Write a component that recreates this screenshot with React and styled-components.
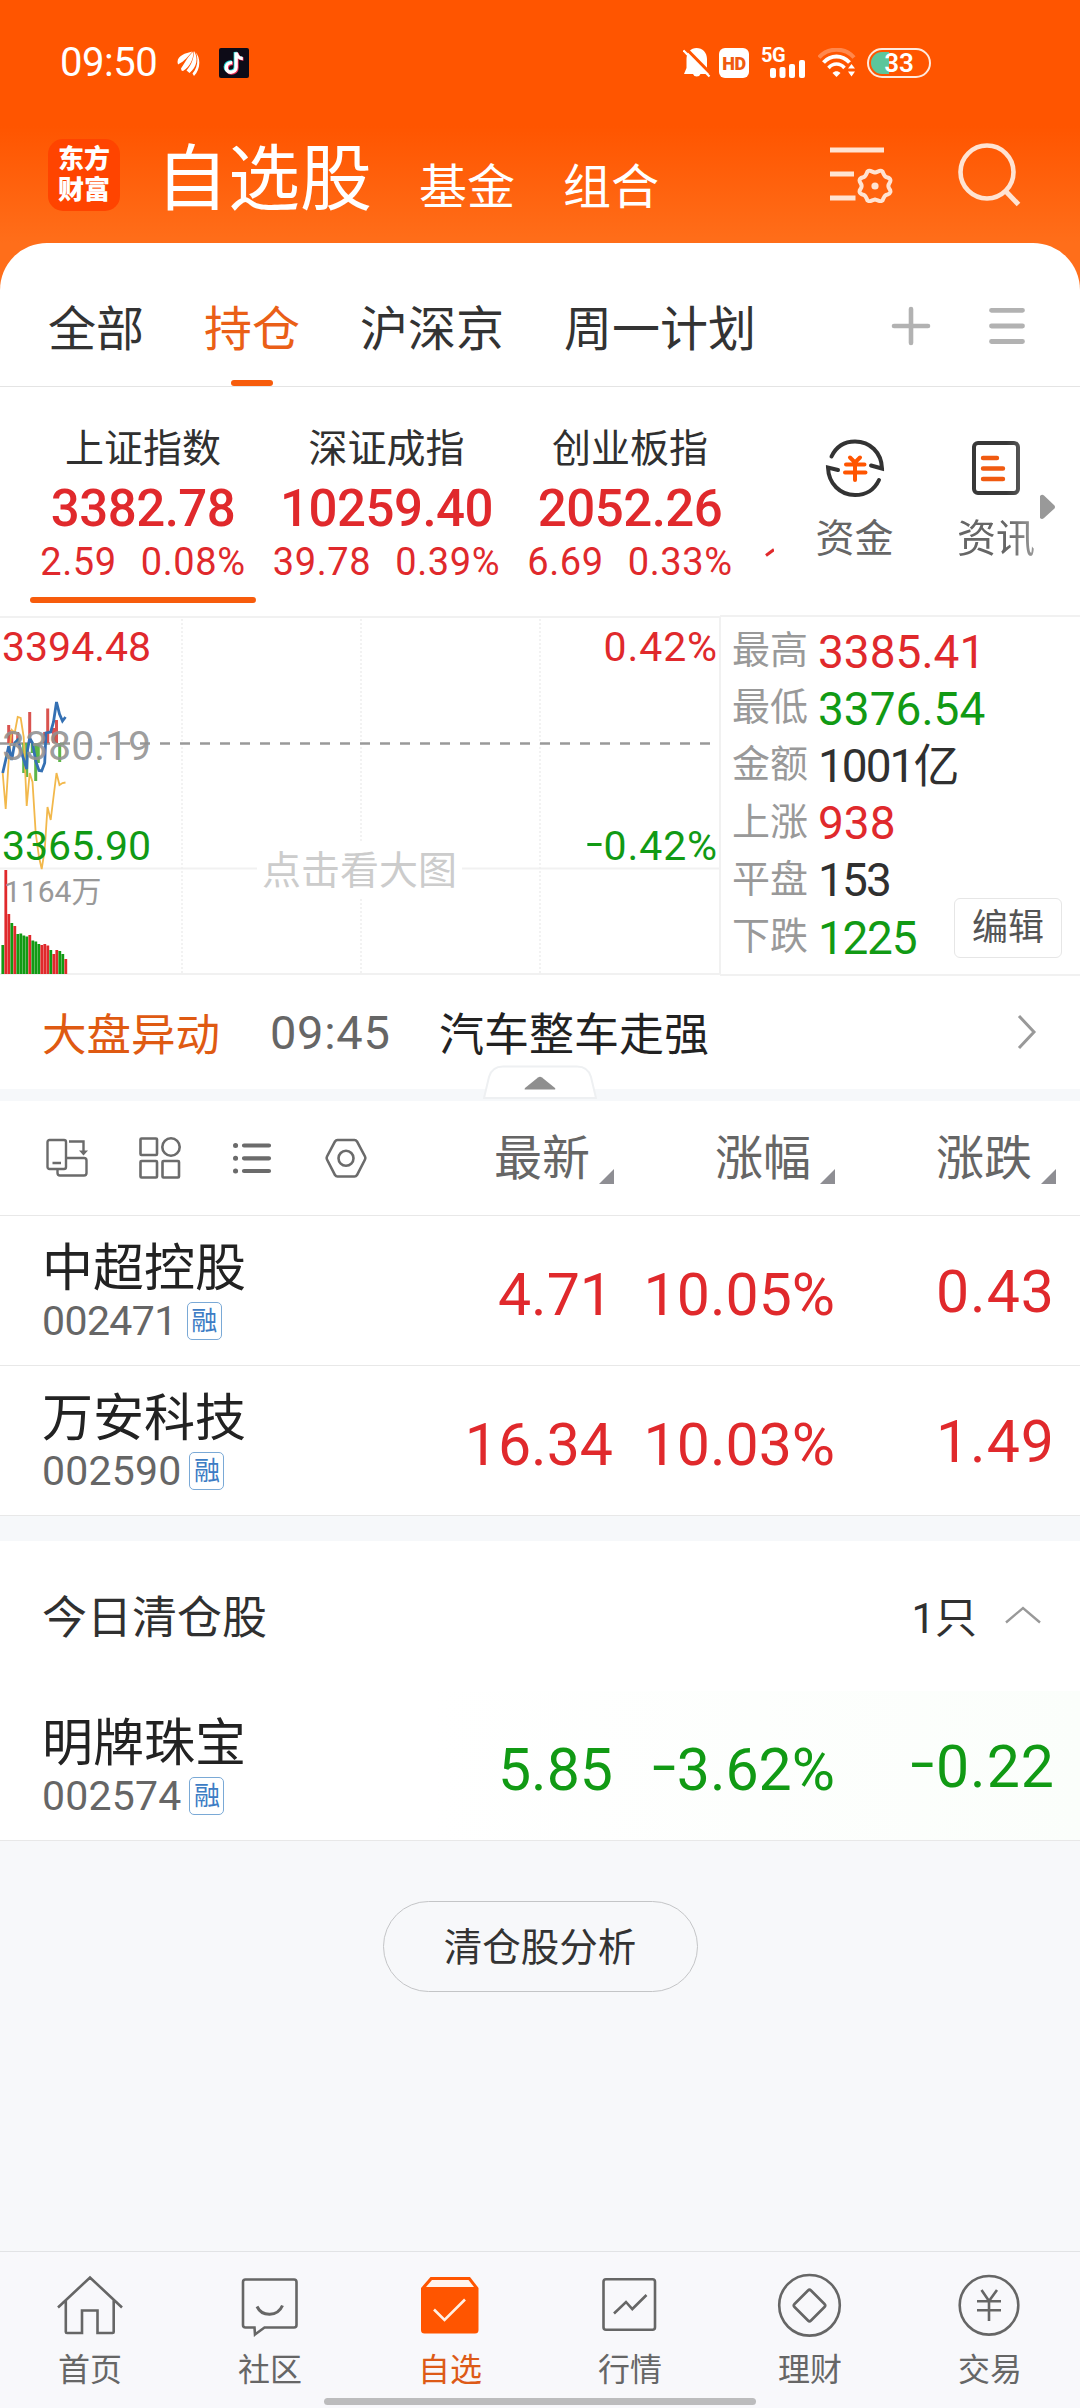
import styled, { createGlobalStyle } from "styled-components";

const RED = "#e0292c";
const GREEN = "#119a14";
const ORANGE = "#f75c0c";

const indexes = [
  { name: "上证指数", value: "3382.78", change: "2.59", percent: "0.08%", active: true },
  { name: "深证成指", value: "10259.40", change: "39.78", percent: "0.39%" },
  { name: "创业板指", value: "2052.26", change: "6.69", percent: "0.33%" },
];

const stats = [
  { label: "最高", value: "3385.41", color: RED },
  { label: "最低", value: "3376.54", color: GREEN },
  { label: "金额", value: "1001亿", color: "#303030", spacing: -2 },
  { label: "上涨", value: "938", color: RED },
  { label: "平盘", value: "153", color: "#303030", spacing: -1.8 },
  { label: "下跌", value: "1225", color: GREEN, spacing: -1.3 },
];

const holdings = [
  { name: "中超控股", code: "002471", price: "4.71", percent: "10.05%", diff: "0.43" },
  { name: "万安科技", code: "002590", price: "16.34", percent: "10.03%", diff: "1.49" },
];

const cleared = [
  { name: "明牌珠宝", code: "002574", price: "5.85", percent: "-3.62%", diff: "-0.22", down: true },
];

// [top, isUp] for every minute, the base line is y=359
const volumes = [
  [330, 0], [255, 1], [299, 1], [308, 0], [311, 1], [319, 0], [318.5, 0], [320.5, 0],
  [321.5, 0], [320, 1], [325.5, 0], [326.5, 0], [329, 0], [330, 1], [329, 1], [330.5, 1],
  [335, 0], [339, 1], [335, 1], [336, 0], [339, 0], [344, 1],
];

// [x, end y], sticks grow from the zero line
const sticks = [
  [9.7, 110], [12.7, 115], [18.7, 117], [30.7, 97], [45.7, 117], [48.7, 93.5], [54.5, 113], [57.5, 105],
  [24.7, 158], [27.7, 162], [33.3, 138], [36.7, 166], [39.3, 148], [60.7, 147], [63.5, 130],
];

/* ---------- icons ---------- */

const LeafIcon = () => (
  <svg width="24" height="26" viewBox="0 0 24 26" fill="#fff">
    <path d="M0.500 12C1 5 8 3.500 15.500 1.500C11 6 8 11 1 14.500Z" />
    <path d="M4 18.500C8 12.500 11 6 16.500 1.500C16.500 9 13 17 6 21Q4 21 4 18.500Z" />
    <path d="M9.500 20.500C14.500 15 17 8 17 1C21.500 8 20 17 12.500 23Z" />
    <path d="M15.500 23.500C21 17 21.500 8 18.500 2C24.500 9 23 20 17 26Z" />
  </svg>
);

const TiktokIcon = () => (
  <svg width="30" height="30" viewBox="0 0 30 30" fill="none" strokeWidth="3.4">
    <rect width="30" height="30" rx="2" fill="#0d0b17" />
    <path d="M12.500 14C4.500 13.500 4.500 23.500 11 23.500C14 23.500 16.300 21.500 16.300 18.500V4C17 8 19.500 10 23 10" stroke="#25d8d8" />
    <path d="M14 15.500C6.500 15 6.500 25 12.500 25C15.500 25 18 23 18 20V5C18.800 9 21 11 24.500 11" stroke="#f0305a" />
    <path d="M13.200 14.600C5.500 14.200 5.500 24.200 11.800 24.200C14.800 24.200 17.100 22.200 17.100 19.200V4.500C18 8.500 20.500 10.500 23.800 10.500" stroke="#fff" />
  </svg>
);

const MuteIcon = () => (
  <svg width="28" height="31" viewBox="0 0 28 31">
    <path
      d="M13.500 0C19.500 0 24 4.500 24 11V20L27 26H17.500A4 4 0 0 1 10 26H1L3.500 20V11C3.500 4.500 8 0 13.500 0Z"
      fill="#fff"
    />
    <path d="M2.500 0L29 27" stroke="#ff5500" strokeWidth="3" />
    <path d="M0.500 2.500L26.500 28.500" stroke="#fff" strokeWidth="2.200" />
    <path d="M-1 5L3 0L4.500 6Z" fill="#ff5500" />
    <path d="M0.500 2.500L6 8" stroke="#fff" strokeWidth="2.200" />
  </svg>
);

const SignalIcon = () => (
  <svg width="36" height="18" viewBox="0 0 36 18" fill="#fff">
    <rect x="0" y="8" width="6" height="10" rx="2" />
    <rect x="9.500" y="7" width="6" height="11" rx="2" />
    <rect x="19" y="4" width="6" height="14" rx="2" />
    <rect x="29" y="0" width="6" height="18" rx="2" />
  </svg>
);

const WifiIcon = () => (
  <svg width="38" height="30" viewBox="0 0 38 30" fill="none" stroke="#fff" strokeWidth="4">
    <path d="M1 9.500C10 -1 27 -1 36 9.500" opacity=".3" />
    <path d="M5.500 14.500C13 6.500 24 6.500 31.500 14.500" />
    <path d="M10.500 20C15 14.800 22 14.800 26.500 20" strokeWidth="3.500" />
    <path d="M14.500 25C17 22.500 20 22.500 22.500 25L18.500 29Z" fill="#fff" stroke="none" />
    <path d="M30 20.500L33.500 16L37 20.500ZM30 23.500H37L33.500 28.500Z" fill="#fff" stroke="none" />
  </svg>
);

const ListSettingIcon = () => (
  <svg width="64" height="56" viewBox="0 0 64 56" fill="none" stroke="#ffe3d2" strokeWidth="5">
    <path d="M0 3H54M0 27H24M0 51H25.500" />
    <path
      d="M45 25.500C48 25 50 22.500 52.500 24.500C54 27.500 54 30 57.500 30.500C61 31.500 61 34 59.500 36C58 38 58 40 59.500 42C61 44 61 46.500 57.500 47.500C54 48 54 50.500 52.500 53.500C50 55.500 48 53 45 52.500C42 53 40 55.500 37.500 53.500C36 50.500 36 48 32.500 47.500C29 46.500 29 44 30.500 42C32 40 32 38 30.500 36C29 34 29 31.500 32.500 30.500C36 30 36 27.500 37.500 24.500C40 22.500 42 25 45 25.500Z"
      strokeWidth="4"
      strokeLinejoin="round"
    />
    <circle cx="45" cy="39" r="3.600" fill="#ffe3d2" stroke="none" />
  </svg>
);

const SearchIcon = () => (
  <svg width="64" height="64" viewBox="0 0 64 64" fill="none" stroke="#ffe3d2" strokeWidth="4.6">
    <circle cx="29" cy="29" r="26.500" />
    <path d="M47.500 48L60.500 61.500" strokeWidth="5" />
  </svg>
);

const PlusIcon = () => (
  <svg width="40" height="40" viewBox="0 0 40 40" stroke="#b2b2b2" strokeWidth="4.600" strokeLinecap="round">
    <path d="M3 20H37M20 3V37" />
  </svg>
);

const MenuIcon = () => (
  <svg width="40" height="40" viewBox="0 0 40 40" stroke="#b2b2b2" strokeWidth="4.800" strokeLinecap="round">
    <path d="M4.500 4.300H35.500M4.500 20H35.500M4.500 35.500H35.500" />
  </svg>
);

const FundIcon = () => (
  <svg width="60" height="60" viewBox="0 0 60 60" fill="none" stroke="#333" strokeWidth="4">
    <path d="M6.500 18.500C11 9 19 3.500 30 3.500C45 3.500 56.500 14.500 57 30.500L46 27.500" strokeLinecap="round" />
    <path d="M54 42C49.500 51.500 41 57 30 57C15 57 3.500 45.500 3 29.500L13 32" strokeLinecap="round" />
    <path d="M25 19.500L30 24.500L35 19.500M21 26.500H39.500M20 34.500H40.500M30 24.500V42" stroke="#ff5500" strokeLinecap="round" />
  </svg>
);

const NewsIcon = () => (
  <svg width="60" height="60" viewBox="0 0 60 60" fill="none" stroke="#383838" strokeWidth="4">
    <rect x="8" y="5" width="44" height="50" rx="4" />
    <path d="M17 20H31M17 30.500H37M17 41H37" stroke="#f05a10" strokeWidth="4.400" strokeLinecap="round" />
  </svg>
);

const RotateIcon = () => (
  <svg width="44" height="44" viewBox="0 0 44 44" fill="none" stroke="#6b6b6b" strokeWidth="2.400">
    <rect x="2.500" y="4" width="18.500" height="29" rx="2" />
    <path d="M7.500 27H16M24 5.500H38.500V17M21.500 22H39C40.500 22 41.500 23 41.500 24.500V37C41.500 38.500 40.500 39.500 39 39.500H15C13.500 39.500 12.500 38.500 12.500 37V33.500" />
    <path d="M34 14.500H43L38.500 19.500Z" fill="#6b6b6b" stroke="none" />
  </svg>
);

const GridIcon = () => (
  <svg width="44" height="44" viewBox="0 0 44 44" fill="none" stroke="#6b6b6b" strokeWidth="2.600">
    <rect x="2.500" y="2.500" width="16.500" height="16.500" rx="1" />
    <circle cx="33" cy="11" r="8.700" />
    <rect x="2.500" y="25" width="16.500" height="16.500" rx="1" />
    <rect x="24.500" y="25" width="16.500" height="16.500" rx="1" />
  </svg>
);

const BulletsIcon = () => (
  <svg width="44" height="44" viewBox="0 0 44 44" stroke="#6b6b6b" strokeWidth="4.200" strokeLinecap="round">
    <path d="M13 9.500H38M13 22.300H38M13 35H38" />
    <path d="M4.500 9.500H4.600M4.500 22.300H4.600M4.500 35H4.600" strokeWidth="5" />
  </svg>
);

const HexIcon = () => (
  <svg width="44" height="44" viewBox="0 0 44 44" fill="none" stroke="#6b6b6b" strokeWidth="2.600">
    <path d="M13.500 4H30.500Q32 4 33 5.500L41 20.500Q41.800 22 41 23.500L33 39Q32 40.500 30.500 40.500H13.500Q12 40.500 11 39L3 23.500Q2.200 22 3 20.500L11 5.500Q12 4 13.500 4Z" />
    <circle cx="22" cy="22.300" r="7.500" />
  </svg>
);

const ChevronRight = () => (
  <svg width="20" height="36" viewBox="0 0 20 36" fill="none" stroke="#999" strokeWidth="3">
    <path d="M2 2L17 18L2 34" />
  </svg>
);

const ChevronUp = () => (
  <svg width="36" height="18" viewBox="0 0 36 18" fill="none" stroke="#999" strokeWidth="2.400">
    <path d="M1 16.500L18 2L35 16.500" />
  </svg>
);

const NavIcon = ({ children }) => (
  <svg width="72" height="72" viewBox="0 0 72 72" fill="none" stroke="#666" strokeWidth="2.600">
    {children}
  </svg>
);

const navs = [
  {
    label: "首页",
    icon: (
      <NavIcon>
        <path d="M4 37.500L36 7.500L68 37.500M11.800 30.500V62Q11.800 63 13 63H28V40.500H43.500V63H58.500Q59.700 63 59.700 62V30.500" />
      </NavIcon>
    ),
  },
  {
    label: "社区",
    icon: (
      <NavIcon>
        <path d="M11.500 9.500H60Q62.500 9.500 62.500 12V55Q62.500 57.500 60 57.500H30.500L21 64.500L20.500 57.500H11.500Q9 57.500 9 55V12Q9 9.500 11.500 9.500Z" />
        <path d="M23 36.500C28 47 43.500 47 48.500 35.500" strokeWidth="3" />
      </NavIcon>
    ),
  },
  {
    label: "自选",
    active: true,
    icon: (
      <NavIcon>
        <path d="M7 18L16.500 7H56L64.500 18V60Q64.500 63.500 61 63.500H10.500Q7 63.500 7 60Z" fill="#ff5500" stroke="none" />
        <path d="M12 17L18 10H54.500L60 17Z" fill="#fff4ec" stroke="none" />
        <path d="M20 39.500L30.500 50L51 29.500" stroke="#fff0e4" />
      </NavIcon>
    ),
  },
  {
    label: "行情",
    icon: (
      <NavIcon>
        <rect x="9.500" y="9.300" width="51.500" height="50.500" rx="2.500" />
        <path d="M20 43.500L32 32L38.300 39L52.500 25" />
      </NavIcon>
    ),
  },
  {
    label: "理财",
    icon: (
      <NavIcon>
        <circle cx="35.500" cy="35.300" r="30.300" />
        <path d="M34 20.500Q35.500 19 37 20.500L50.500 34Q52 35.500 50.500 37L37 50.500Q35.500 52 34 50.500L20.500 37Q19 35.500 20.500 34Z" />
      </NavIcon>
    ),
  },
  {
    label: "交易",
    icon: (
      <NavIcon>
        <circle cx="35" cy="35.300" r="29.300" />
        <path d="M27.500 20L35 31L43 20M23 31.300H47M23 40.300H47M35 31V51" />
      </NavIcon>
    ),
  },
];

const MinuteChart = () => (
  <ChartSvg width="722" height="360" viewBox="0 0 722 360" fill="none">
    <path d="M1 2H722M1 253.500H722M1 359H722M721 1V360" stroke="#f1f1f1" strokeWidth="2" />
    <path d="M183 4V358M362 4V358M541 4V358" stroke="#eee" strokeWidth="1.500" strokeDasharray="2 2" />
    <path d="M1 128.500H712" stroke="#999" strokeWidth="2.400" strokeDasharray="10 10" />
    {sticks.map(([x, y]) => (
      <path key={x} d={`M${x} 128V${y}`} stroke={y < 128 ? "#d9534f" : "#5eb548"} strokeWidth="3" />
    ))}
    {volumes.map(([y, up], i) => (
      <path key={i} d={`M${3.800 + i * 3} 359V${y}`} stroke={up ? "#e0292c" : "#119a14"} strokeWidth="2.800" />
    ))}
    <path
      d="M3.700 158L6.700 194L9.700 145L12.700 115L15.700 118L18.700 102L21.700 103L24.700 122L27.700 191L30.700 158L33.500 167L36.700 218L40 242L42.700 254L45.700 235L48.500 192L51.700 205L54.500 182L57.500 158L60.500 170L63.500 168L66.500 167.500"
      stroke="#f2b84b"
      strokeWidth="1.800"
    />
    <path
      d="M3.700 158L6.700 145L9.700 131L12.700 145L15.700 128L18.700 125L21.700 135L27.700 154L28.500 135L30.700 123L33.500 128L36.700 146L40 155.500L42.700 156L45.700 148L47 118L51.700 117L54.500 107L57.500 87L60.500 99L63.500 106L66.500 102"
      stroke="#3470b3"
      strokeWidth="2.800"
    />
  </ChartSvg>
);

const Signed = ({ value }) =>
  value.startsWith("-") ? (
    <>
      <Minus>-</Minus>
      {value.slice(1)}
    </>
  ) : (
    value
  );

const StockRow = ({ stock }) => (
  <Row $down={stock.down}>
    <RowTitle>
      <StockName>{stock.name}</StockName>
      <StockCode $tight={stock.code.includes("1")}>
        {stock.code}
        <Badge>融</Badge>
      </StockCode>
    </RowTitle>
    <Figure $down={stock.down}>{stock.price}</Figure>
    <Figure $down={stock.down}><Signed value={stock.percent} /></Figure>
    <Figure $down={stock.down} $last><Signed value={stock.diff} /></Figure>
  </Row>
);

export default function App() {
  return (
    <>
      <GlobalStyle />
      <Screen>
        <Header>
          <StatusBar>
            <Clock>09:50</Clock>
            <LeafIcon />
            <TiktokIcon />
            <StatusIcons>
              <MuteIcon />
              <HdMark>HD</HdMark>
              <Network>
                <span>5G</span>
                <SignalIcon />
              </Network>
              <WifiIcon />
              <Battery>33</Battery>
            </StatusIcons>
          </StatusBar>
          <TitleBar>
            <Logo>东方<br />财富</Logo>
            <Titles>
              <MainTitle>自选股</MainTitle>
              <SubTitle>基金</SubTitle>
              <SubTitle>组合</SubTitle>
            </Titles>
            <TitleActions>
              <ListSettingIcon />
              <SearchIcon />
            </TitleActions>
          </TitleBar>
        </Header>

        <Sheet>
          <Tabs>
            <Tab>全部</Tab>
            <Tab $active>持仓</Tab>
            <Tab>沪深京</Tab>
            <Tab>周一计划</Tab>
            <TabActions>
              <PlusIcon />
              <MenuIcon />
            </TabActions>
          </Tabs>

          <IndexBar>
            <IndexList>
              {indexes.map((item) => (
                <IndexItem key={item.name} $active={item.active}>
                  <IndexName>{item.name}</IndexName>
                  <IndexValue>{item.value}</IndexValue>
                  <IndexChange>
                    <span>{item.change}</span>
                    <span>{item.percent}</span>
                  </IndexChange>
                </IndexItem>
              ))}
              <IndexPeek width="9" height="9" viewBox="0 0 9 9">
                <path d="M1 7.500L9 1.500" stroke={RED} strokeWidth="3" />
              </IndexPeek>
            </IndexList>
            <Shortcut>
              <FundIcon />
              资金
            </Shortcut>
            <Shortcut $fade>
              <NewsIcon />
              资讯
            </Shortcut>
            <MoreArrow width="16" height="26" viewBox="0 0 16 26">
              <path d="M0 2Q2 0 4 1.500L14.500 11.500Q15.500 13 14.500 14.500L4 24Q2 26 0 24Z" fill="#999" />
            </MoreArrow>
          </IndexBar>

          <Market>
            <ChartBox>
              <MinuteChart />
              <ChartLabel $top={14} $left={2} $color={RED}>3394.48</ChartLabel>
              <ChartLabel $top={113} $left={2} $color="rgba(145, 145, 145, .88)">3380.19</ChartLabel>
              <ChartLabel $top={213} $left={2} $color={GREEN}>3365.90</ChartLabel>
              <ChartLabel $top={14} $right={2} $color={RED}>0.42%</ChartLabel>
              <ChartLabel $top={213} $right={2} $color={GREEN}><Signed value="-0.42%" /></ChartLabel>
              <ChartLabel $top={260} $left={4} $color="#999" $size={30}>1164万</ChartLabel>
              <ChartHint>点击看大图</ChartHint>
            </ChartBox>
            <Stats>
              {stats.map((item) => (
                <Stat key={item.label}>
                  <StatLabel>{item.label}</StatLabel>
                  <StatValue $color={item.color} $spacing={item.spacing}>{item.value}</StatValue>
                </Stat>
              ))}
              <EditButton>编辑</EditButton>
            </Stats>
          </Market>

          <NewsBar>
            <NewsTag>大盘异动</NewsTag>
            <NewsTime>09:45</NewsTime>
            <NewsText>汽车整车走强</NewsText>
            <ChevronRight />
            <Handle width="114" height="36" viewBox="0 0 114 36">
              <path d="M1 33L6 12Q9 1.500 20 1.500H94Q105 1.500 108 12L113 33Z" fill="#fff" stroke="#eef0f2" strokeWidth="2" />
              <path d="M42 24.500Q41 24.500 42 23L55 12.500Q57 11 59 12.500L72 23Q73 24.500 71 24.500Z" fill="#8f8f8f" />
            </Handle>
          </NewsBar>
          <Divider $height={12} />

          <ListHead>
            <Tools>
              <RotateIcon />
              <GridIcon />
              <BulletsIcon />
              <HexIcon />
            </Tools>
            {["最新", "涨幅", "涨跌"].map((label) => (
              <HeadCell key={label}>
                {label}
                <svg width="15" height="15" viewBox="0 0 15 15"><path d="M15 0V15H0Z" fill="#8e8e93" /></svg>
              </HeadCell>
            ))}
          </ListHead>
          {holdings.map((stock) => (
            <StockRow key={stock.code} stock={stock} />
          ))}
          <Divider $height={25} />

          <ClearedHead>
            <span>今日清仓股</span>
            <ClearedCount>
              1只
              <ChevronUp />
            </ClearedCount>
          </ClearedHead>
          {cleared.map((stock) => (
            <StockRow key={stock.code} stock={stock} />
          ))}
        </Sheet>

        <AnalysisArea>
          <AnalysisButton>清仓股分析</AnalysisButton>
        </AnalysisArea>

        <NavBar>
          {navs.map((item) => (
            <NavItem key={item.label} $active={item.active}>
              {item.icon}
              {item.label}
            </NavItem>
          ))}
          <HomeIndicator />
        </NavBar>
      </Screen>
    </>
  );
}

/* ---------- styles ---------- */

const GlobalStyle = createGlobalStyle`
  * {
    box-sizing: border-box;
  }

  body {
    margin: 0;
    background: #f7f8fa;
    font-family: Roboto, "Noto Sans CJK SC", sans-serif;
    color: #303030;
  }

  svg {
    display: block;
    flex: none;
  }
`;

const Screen = styled.div`
  width: 1080px;
  height: 2408px;
  display: flex;
  flex-direction: column;
  overflow: hidden;
  white-space: nowrap;
`;

const Header = styled.header`
  height: 291px;
  flex: none;
  background: linear-gradient(#ff5500 126px, #ff6e1a 243px);
  color: #fff;
`;

const StatusBar = styled.div`
  height: 126px;
  padding: 0 149px 0 60px;
  display: flex;
  align-items: center;
`;

const Clock = styled.span`
  width: 117px;
  font-size: 40px;
  letter-spacing: -0.5px;
  line-height: 40px;

  & + svg {
    margin-right: 18px;
  }
`;

const StatusIcons = styled.div`
  margin-left: auto;
  display: flex;
  align-items: center;
`;

const HdMark = styled.span`
  width: 30px;
  height: 30px;
  margin: 0 12px 0 8px;
  border-radius: 6px;
  background: #fff;
  color: #f05a10;
  font-size: 18px;
  font-weight: 900;
  line-height: 31px;
  letter-spacing: -0.5px;
  text-align: center;
`;

const Network = styled.div`
  width: 45px;
  height: 30px;
  margin-right: 12px;
  display: grid;

  span {
    grid-area: 1 / 1;
    font-size: 20px;
    font-weight: 700;
    line-height: 15px;
    letter-spacing: -0.5px;
  }

  svg {
    grid-area: 1 / 1;
    align-self: end;
    justify-self: end;
  }
`;

const Battery = styled.span`
  width: 64px;
  height: 30px;
  margin-left: 11px;
  border: 2px solid #ffeadd;
  border-radius: 15px;
  background: linear-gradient(90deg, #5cc69b 18px, transparent 18px) content-box;
  padding: 2px;
  font-size: 26px;
  font-weight: 600;
  line-height: 22px;
  text-align: center;
`;

const TitleBar = styled.div`
  height: 98px;
  padding: 0 58px 0 48px;
  display: flex;
  align-items: center;
`;

const Logo = styled.div`
  width: 72px;
  height: 72px;
  margin-right: 36px;
  padding-top: 5px;
  border-radius: 15px;
  background: #ff4400;
  font-size: 26px;
  font-weight: 900;
  line-height: 31px;
  text-align: center;
`;

const Titles = styled.div`
  padding-top: 10px;
  display: flex;
  align-items: baseline;
`;

const MainTitle = styled.h1`
  margin: 0 47px 0 0;
  font-size: 72px;
  font-weight: 400;
  line-height: 92px;
`;

const SubTitle = styled.span`
  margin-right: 48px;
  font-size: 48px;
`;

const TitleActions = styled.div`
  margin-left: auto;
  display: flex;
  align-items: center;
  gap: 64px;
`;

const Sheet = styled.main`
  flex: none;
  margin-top: -48px;
  border-radius: 47px 47px 0 0;
  background: #fff;
`;

const Tabs = styled.nav`
  height: 144px;
  padding: 0 53px 0 48px;
  display: flex;
  align-items: stretch;
  gap: 60px;
  border-bottom: 1px solid #e4e4e4;
`;

const Tab = styled.div`
  padding-top: 26px;
  font-size: 48px;
  line-height: 122px;
  color: ${(props) => (props.$active ? "#ea5f17" : "#333")};

  &::after {
    content: "";
    display: ${(props) => (props.$active ? "block" : "none")};
    width: 42px;
    height: 6px;
    margin: -11px auto 0;
    border-radius: 3px;
    background: ${ORANGE};
  }
`;

const TabActions = styled.div`
  margin-left: auto;
  padding-top: 23px;
  display: flex;
  align-items: center;
  gap: 56px;
`;

const IndexBar = styled.section`
  height: 228px;
  display: flex;
  position: relative;
`;

const IndexList = styled.div`
  width: 774px;
  padding-left: 30px;
  display: flex;
  gap: 17.500px;
  overflow: hidden;
`;

const IndexItem = styled.div`
  flex: none;
  width: 226px;
  height: 216px;
  padding-top: 36px;
  display: flex;
  flex-direction: column;
  align-items: center;

  &::after {
    content: "";
    width: 226px;
    height: 6px;
    margin-top: 14px;
    border-radius: 3px;
    background: ${(props) => (props.$active ? ORANGE : "transparent")};
  }
`;

const IndexName = styled.div`
  font-size: 39px;
  line-height: 52px;
`;

const IndexValue = styled.div`
  font-size: 51px;
  font-weight: 500;
  line-height: 67px;
  letter-spacing: -0.500px;
  color: ${RED};
`;

const IndexChange = styled.div`
  display: flex;
  gap: 24px;
  font-size: 38px;
  line-height: 41px;
  letter-spacing: 0.600px;
  color: ${RED};
`;

const IndexPeek = styled.svg`
  margin: 161px 0 0 4px;
`;

const Shortcut = styled.div`
  width: 141px;
  margin-left: ${(props) => (props.$fade ? 4 : 0)}px;
  padding: 51px 0 0 ${(props) => (props.$fade ? 13 : 20)}px;
  display: flex;
  flex-direction: column;
  align-items: center;
  gap: 13px;
  font-size: 39px;
  line-height: 56px;
  color: #666;
  mask-image: ${(props) => (props.$fade ? "linear-gradient(90deg, #000 88px, rgba(0, 0, 0, .6) 121px)" : "none")};
`;

const MoreArrow = styled.svg`
  position: absolute;
  right: 24px;
  top: 107px;
`;

const Market = styled.section`
  height: 361px;
  display: flex;
`;

const ChartBox = styled.div`
  position: relative;
  width: 720px;
  flex: none;
`;

const ChartSvg = styled.svg`
  margin-left: -1px;
`;

const ChartLabel = styled.span`
  position: absolute;
  top: ${(props) => props.$top}px;
  ${(props) => (props.$right ? `right: ${props.$right}px` : `left: ${props.$left}px`)};
  font-size: ${(props) => props.$size || 41}px;
  line-height: ${(props) => (props.$size ? 34 : 36)}px;
  letter-spacing: ${(props) => (props.$right ? 0.9 : 0)}px;
  color: ${(props) => props.$color};
`;

const ChartHint = styled.span`
  position: absolute;
  left: 257px;
  top: 228px;
  padding: 0 5px;
  background: #fff;
  font-size: 39px;
  line-height: 56px;
  color: #ccc;
`;

const Minus = styled.span`
  display: inline-block;
  width: 0.44em;
  text-align: center;
  transform: translateY(-0.07em) scaleX(1.45);
`;

const Stats = styled.div`
  position: relative;
  flex: 1;
  padding: 6px 0 0 12px;
  border-top: 2px solid #f1f1f1;
  border-bottom: 2px solid #f1f1f1;
`;

const Stat = styled.div`
  height: 57.200px;
  display: flex;
  align-items: center;
`;

const StatLabel = styled.span`
  width: 86px;
  padding-bottom: 3px;
  font-size: 38px;
  line-height: 50px;
  color: #999;
`;

const StatValue = styled.span`
  font-size: 46px;
  line-height: 50px;
  letter-spacing: ${(props) => props.$spacing || 0}px;
  color: ${(props) => props.$color};
`;

const EditButton = styled.button`
  position: absolute;
  right: 18px;
  bottom: 16px;
  width: 108px;
  height: 60px;
  padding: 1px 0 0;
  border: 1px solid #e6e6e6;
  border-radius: 6px;
  background: #fff;
  font: 36px/57px Roboto, "Noto Sans CJK SC", sans-serif;
  color: #555;
`;

const NewsBar = styled.section`
  position: relative;
  height: 113px;
  padding: 0 43px 2px 42px;
  display: flex;
  align-items: center;
`;

const NewsTag = styled.span`
  width: 228px;
  font-size: 44.500px;
  color: #df5a12;
`;

const NewsTime = styled.span`
  width: 169px;
  padding-top: 2px;
  font-size: 47px;
  letter-spacing: 0.700px;
  color: #666;
`;

const NewsText = styled.span`
  flex: 1;
  font-size: 45px;
  color: #222;
`;

const Handle = styled.svg`
  position: absolute;
  left: 483px;
  bottom: -12px;
`;

const Divider = styled.div`
  height: ${(props) => props.$height}px;
  background: #f6f8fa;
`;

const ListHead = styled.div`
  height: 115px;
  padding-right: 24px;
  display: flex;
  align-items: center;
  border-bottom: 1px solid #e8e8e8;
`;

const Tools = styled.div`
  flex: 1;
  padding-left: 45px;
  display: flex;
  gap: 49px;
`;

const HeadCell = styled.div`
  width: 221px;
  padding-top: 1px;
  display: flex;
  align-items: flex-end;
  justify-content: flex-end;
  gap: 9px;
  font-size: 48px;
  line-height: 60px;
  color: #666;

  svg {
    margin-bottom: 5px;
  }
`;

const Row = styled.div`
  height: 150px;
  padding: 0 25px 0 42px;
  display: flex;
  align-items: center;
  border-bottom: 1px solid #e8e8e8;
  background: ${(props) => (props.$down ? "linear-gradient(90deg, #fff 40%, #fbfefb)" : "#fff")};
`;

const RowTitle = styled.div`
  flex: 1;
`;

const StockName = styled.div`
  font-size: 51px;
  line-height: 58px;
  color: #222;
`;

const StockCode = styled.div`
  padding-top: 2px;
  display: flex;
  align-items: center;
  gap: ${(props) => (props.$tight ? 10 : 8)}px;
  font-size: 41px;
  line-height: 42px;
  letter-spacing: ${(props) => (props.$tight ? -0.6 : 0.2)}px;
  color: #666;
`;

const Badge = styled.span`
  width: 35px;
  height: 38px;
  border: 1.500px solid #7aa9d6;
  border-radius: 5px;
  font-size: 26px;
  line-height: 36px;
  letter-spacing: 0;
  text-align: center;
  color: #3d7cc4;
`;

const Figure = styled.div`
  width: ${(props) => (props.$last ? 220 : 222)}px;
  padding-top: ${(props) => (props.$last ? 2 : 8)}px;
  font-size: 59px;
  line-height: 64px;
  letter-spacing: ${(props) => (props.$last ? 1 : 0)}px;
  text-align: right;
  color: ${(props) => (props.$down ? GREEN : RED)};
`;

const ClearedHead = styled.div`
  height: 150px;
  padding: 0 39px 3px 42px;
  display: flex;
  align-items: center;
  justify-content: space-between;
  font-size: 45px;
`;

const ClearedCount = styled.div`
  display: flex;
  align-items: center;
  gap: 28px;
  font-size: 42px;
`;

const AnalysisArea = styled.section`
  flex: 1;
  padding-top: 60px;
  background: #f7f8fa;
`;

const AnalysisButton = styled.button`
  display: block;
  width: 315px;
  height: 91px;
  margin: 0 auto;
  padding: 2px 0 0;
  border: 1px solid #c4c5c7;
  border-radius: 46px;
  background: transparent;
  font: 38.500px/60px Roboto, "Noto Sans CJK SC", sans-serif;
  color: #333;
`;

const NavBar = styled.footer`
  position: relative;
  flex: none;
  height: 157px;
  display: grid;
  grid-template-columns: repeat(6, 1fr);
  border-top: 1px solid #e2e3e5;
  background: #f8f8fb;
`;

const NavItem = styled.div`
  padding-top: 18px;
  display: flex;
  flex-direction: column;
  align-items: center;
  gap: 8px;
  font-size: 32px;
  line-height: 40px;
  color: ${(props) => (props.$active ? "#dd5a17" : "#666")};
`;

const HomeIndicator = styled.div`
  position: absolute;
  left: 324px;
  bottom: 3px;
  width: 432px;
  height: 7px;
  border-radius: 4px;
  background: #bcbcbd;
`;
